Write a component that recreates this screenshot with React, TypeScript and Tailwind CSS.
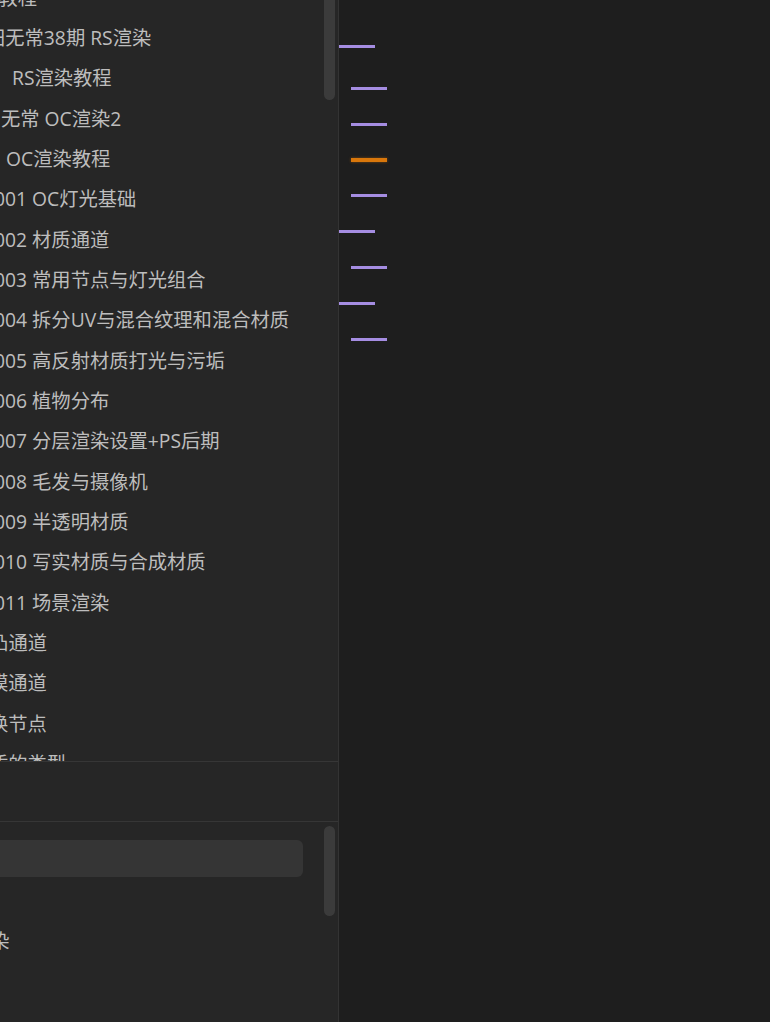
import React from 'react';

type Row = { x: number; text: string };

const rows: Row[] = [
  { x: -40, text: '渲染教程' },
  { x: -14, text: '田无常38期 RS渲染' },
  { x: 12, text: 'RS渲染教程' },
  { x: 1, text: '无常 OC渲染2' },
  { x: 6, text: 'OC渲染教程' },
  { x: -6, text: '001 OC灯光基础' },
  { x: -6, text: '002 材质通道' },
  { x: -6, text: '003 常用节点与灯光组合' },
  { x: -6, text: '004 拆分UV与混合纹理和混合材质' },
  { x: -6, text: '005 高反射材质打光与污垢' },
  { x: -6, text: '006 植物分布' },
  { x: -6, text: '007 分层渲染设置+PS后期' },
  { x: -6, text: '008 毛发与摄像机' },
  { x: -6, text: '009 半透明材质' },
  { x: -6, text: '010 写实材质与合成材质' },
  { x: -6, text: '011 场景渲染' },
  { x: -30, text: '凹凸通道' },
  { x: -11, text: '模通道' },
  { x: -11, text: '换节点' },
  { x: -11, text: '质的类型' },
];

// outline marks on the right: top offset, indent, colour
const marks = [
  { top: 45, indent: false, orange: false },
  { top: 87, indent: true, orange: false },
  { top: 123, indent: true, orange: false },
  { top: 158, indent: true, orange: true },
  { top: 194, indent: true, orange: false },
  { top: 230, indent: false, orange: false },
  { top: 266, indent: true, orange: false },
  { top: 302, indent: false, orange: false },
  { top: 338, indent: true, orange: false },
];

const font = { fontFamily: '"Open Sans", "Noto Sans CJK SC", sans-serif' };

const App: React.FC = () => {
  return (
    <div className="flex h-[1022px] w-[770px] overflow-hidden bg-[#1e1e1e]" style={font}>
      <aside className="relative flex h-full w-[339px] shrink-0 flex-col overflow-hidden border-r border-[#333333] bg-[#262626]">
        <div className="relative h-[762px] shrink-0 overflow-hidden border-b border-[#363636]">
          <div className="ml-[-40px] mt-[-22px]">
            {rows.map((r, i) => (
              <div
                key={i}
                className="flex h-[40.33px] items-center whitespace-nowrap text-[19.3px] text-[#bdbdbd]"
                style={{ paddingLeft: r.x + 40 }}
              >
                {r.text}
              </div>
            ))}
          </div>
          <div className="absolute left-[324px] top-[-20px] h-[120px] w-[11px] rounded-full bg-[#3b3b3b]" />
        </div>

        <div className="h-[60px] shrink-0 border-b border-[#363636]" />

        <div className="relative flex-1">
          <div className="ml-[-20px] mt-[18px] h-[37px] w-[323px] rounded-[6px] bg-[#353535]" />
          <div className="ml-[-29px] mt-[44px] flex h-[40px] items-center whitespace-nowrap text-[19.3px] text-[#bdbdbd]">
            渲染
          </div>
          <div className="absolute left-[324px] top-[4px] h-[90px] w-[11px] rounded-full bg-[#3b3b3b]" />
        </div>
      </aside>

      <main className="relative flex-1">
        {marks.map((m, i) => (
          <div
            key={i}
            className={
              m.orange
                ? 'absolute h-[4px] w-[36px] bg-[#d9770b] shadow-[0_0_3px_rgba(217,119,11,0.5)]'
                : 'absolute h-[3px] w-[36px] bg-[#a58de2]'
            }
            style={{ top: m.top, left: m.indent ? 12 : 0 }}
          />
        ))}
      </main>
    </div>
  );
};

export default App;
